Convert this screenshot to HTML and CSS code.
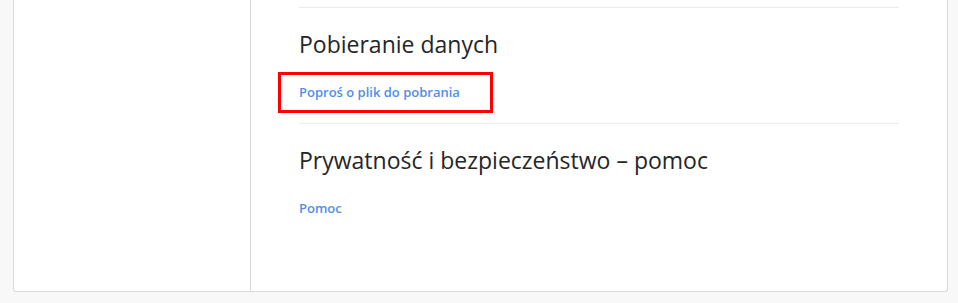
FILE: index.html
```html
<!DOCTYPE html>
<html lang="pl">
<head>
  <meta charset="UTF-8" />
  <title>Prywatność</title>
  <link rel="stylesheet" href="styles.css">
</head>
<body>
  <div class="page">
    <div class="card">
      <aside class="sidebar"></aside>
      <main class="content">
        <!-- Data download -->
        <section class="block">
          <h2>Pobieranie danych</h2>
          <span class="highlight">
            <a href="#" class="link">Poproś o plik do pobrania</a>
            <span class="outline"></span>
          </span>
        </section>

        <!-- Help -->
        <section class="block">
          <h2>Prywatność i bezpieczeństwo – pomoc</h2>
          <a href="#" class="link">Pomoc</a>
        </section>
      </main>
    </div>
  </div>
</body>
</html>
```

FILE: styles.css
```css
* {
  box-sizing: border-box;
  margin: 0;
  padding: 0;
}
body {
  font-family: "Open Sans", "Noto Sans", sans-serif;
  background: #f8f8f8;
  color: #262626;
}
.page {
  padding: 0 10px 11px 13px;
}
.card {
  display: flex;
  background: #fff;
  border: 1px solid #d9d9d9;
  border-top: 0;
  border-radius: 0 0 3px 3px;
}
.sidebar {
  width: 237px;
  border-right: 1px solid #d9d9d9;
}
.content {
  flex: 1;
  padding: 7px 48px 52px;
}
.block {
  border-top: 1px solid #ebebeb;
  padding: 20px 0 21px;
}
.block h2 {
  font-size: 23px;
  line-height: 32px;
  font-weight: 400;
  margin-bottom: 20px;
}
.link {
  display: inline-block;
  font-size: 13px;
  line-height: 20px;
  font-weight: 600;
  color: #4f8fec;
  text-decoration: none;
}
.highlight {
  position: relative;
  display: inline-block;
  vertical-align: top;
}
.highlight .outline {
  position: absolute;
  top: -8px;
  bottom: -11px;
  left: -21px;
  right: -33px;
  border: 3px solid #f00;
}
```
